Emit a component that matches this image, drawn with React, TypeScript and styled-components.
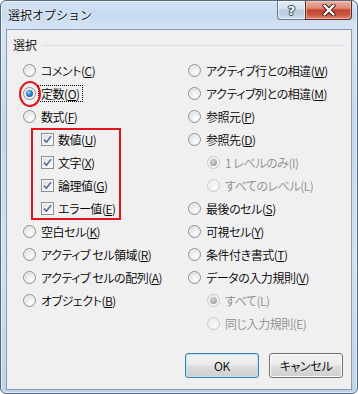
import React from "react";
import styled, { createGlobalStyle, css } from "styled-components";

const Global = createGlobalStyle`
  html, body { margin: 0; padding: 0; background: #ffffff; }
  body {
    font-family: "Noto Sans CJK JP", "Noto Sans", sans-serif;
    font-size: 12px;
    color: #000;
  }
  * { box-sizing: border-box; }
`;

const Window = styled.div`
  width: 358px;
  height: 394px;
  display: flex;
  flex-direction: column;
  border: 1px solid #56687c;
  border-radius: 6px;
  background: linear-gradient(
    180deg,
    #d3e3f4 0px,
    #c6daf0 14px,
    #d6e5f5 28px,
    #c4d9ef 120px,
    #d0e1f3 260px,
    #bed4ec 393px
  );
  box-shadow: inset 0 0 0 1px rgba(255, 255, 255, 0.55);
  overflow: hidden;
`;

const TitleBar = styled.div`
  height: 28px;
  display: flex;
  align-items: flex-start;
  flex-shrink: 0;
`;

const Title = styled.div`
  align-self: center;
  padding-left: 7px;
  font-size: 12px;
  line-height: 16px;
  font-weight: 350;
  color: #000;
  text-shadow: 0 0 6px rgba(255, 255, 255, 0.9), 0 0 2px #fff;
  flex: 1;
`;

const CaptionButtons = styled.div`
  display: flex;
  margin-right: 5px;
  margin-top: -1px;
`;

const HelpButton = styled.div`
  width: 28px;
  height: 20px;
  border: 1px solid #66788d;
  border-top-color: #7f90a3;
  border-right: none;
  border-radius: 0 0 0 4px;
  background: linear-gradient(180deg, #e6eef7 0%, #d3e0ee 45%, #b9cbe0 50%, #c2d3e6 80%, #d5e3f2 100%);
  box-shadow: inset 0 0 0 1px rgba(255, 255, 255, 0.6);
  display: flex;
  align-items: center;
  justify-content: center;
  font-family: "DejaVu Sans", sans-serif;
  font-weight: bold;
  font-size: 13px;
  color: #ffffff;
  text-shadow: 0 0 1px #2f3d4c, 0 0 1px #2f3d4c, 1px 0 0 #3a4a5c, -1px 0 0 #3a4a5c,
    0 1px 0 #3a4a5c, 0 -1px 0 #3a4a5c;
`;

const CloseButton = styled.div`
  width: 47px;
  height: 20px;
  border: 1px solid #5b2a25;
  border-top-color: #7a3b33;
  border-radius: 0 0 4px 0;
  background: linear-gradient(180deg, #eab2a4 0%, #dc8a78 40%, #c8452f 50%, #c95541 75%, #e2876f 100%);
  box-shadow: inset 0 0 0 1px rgba(255, 220, 210, 0.5);
  display: flex;
  align-items: center;
  justify-content: center;
`;

const Client = styled.div`
  flex: 1;
  margin: 0 5px 3px 5px;
  border: 1px solid #8a9bb0;
  background: #f0f0f0;
  display: flex;
  flex-direction: column;
`;

const GroupHeader = styled.div`
  display: flex;
  align-items: center;
  height: 16px;
  margin: 7px 6px 0 6px;
`;

const GroupLabel = styled.span`
  line-height: 16px;
  font-size: 12px;
  font-weight: 350;
`;

const Rule = styled.div`
  flex: 1;
  height: 1px;
  margin-left: 5px;
  background: #d5dfe5;
`;

const Columns = styled.div`
  display: grid;
  grid-template-columns: 165px 1fr;
  padding-left: 16px;
  margin-top: 6px;
`;

const Column = styled.div`
  display: flex;
  flex-direction: column;
`;

const Row = styled.div<{ $indent?: boolean }>`
  height: 23px;
  display: flex;
  align-items: center;
  padding-left: ${(p) => (p.$indent ? "19px" : "0")};
`;

const Label = styled.span<{ $disabled?: boolean; $focus?: boolean }>`
  display: inline-block;
  line-height: 15px;
  padding: 0 1px;
  font-size: 12px;
  font-weight: 350;
  letter-spacing: -0.45px;
  font-feature-settings: "palt";
  white-space: pre;
  color: ${(p) => (p.$disabled ? "#8d8d8d" : "#000")};
  ${(p) =>
    p.$focus &&
    css`
      outline: 1px dotted #000;
      padding: 0 2px;
      margin-left: -1px;
    `}
  u {
    text-decoration: underline;
    text-underline-offset: 1px;
  }
`;

const RadioWrap = styled.span`
  position: relative;
  display: inline-flex;
  width: 13px;
  height: 13px;
  margin-right: 4px;
  flex-shrink: 0;
`;

const RadioCircle = styled.span<{ $checked?: boolean; $disabled?: boolean }>`
  width: 13px;
  height: 13px;
  border-radius: 50%;
  border: 1px solid ${(p) => (p.$disabled ? "#c9c9c9" : "#8c8f91")};
  background: ${(p) =>
    p.$disabled
      ? "radial-gradient(circle at 65% 70%, #fbfbfb 0%, #eeeeee 60%, #e2e2e2 100%)"
      : "radial-gradient(circle at 65% 70%, #ffffff 0%, #e8e8e8 55%, #cfcfcf 100%)"};
  box-shadow: inset 0 0 0 1px ${(p) => (p.$disabled ? "#f4f4f4" : "#f2f2f2")};
  display: flex;
  align-items: center;
  justify-content: center;
`;

const RadioDot = styled.span<{ $disabled?: boolean }>`
  width: 7px;
  height: 7px;
  border-radius: 50%;
  background: ${(p) =>
    p.$disabled
      ? "radial-gradient(circle at 40% 35%, #d8d8d8 0%, #a9a9a9 60%, #8e8e8e 100%)"
      : "radial-gradient(circle at 40% 35%, #9ad8ff 0%, #2a82cc 45%, #0d3f79 100%)"};
`;

const Ring = styled.span`
  position: absolute;
  left: 50%;
  top: 50%;
  width: 22px;
  height: 26px;
  transform: translate(-50%, -50%);
  border: 2px solid #e5121b;
  border-radius: 50%;
  pointer-events: none;
`;

const CheckGroup = styled.div`
  margin-left: 8px;
  width: 90px;
  padding-left: 10px;
  box-shadow: inset 0 0 0 2px #e5121b;
  display: flex;
  flex-direction: column;
`;

const CheckBox = styled.span`
  width: 13px;
  height: 13px;
  margin-right: 3px;
  border: 1px solid #8e8f8f;
  background: linear-gradient(135deg, #dcdcdc 0%, #f0f0f0 55%, #fbfbfb 100%);
  box-shadow: inset 0 0 0 1px #f6f6f6;
  display: flex;
  align-items: center;
  justify-content: center;
  flex-shrink: 0;
`;

const ButtonRow = styled.div`
  margin-top: auto;
  display: flex;
  justify-content: flex-end;
  gap: 10px;
  padding: 0 8px 11px 0;
`;

const DialogButton = styled.button<{ $default?: boolean }>`
  width: 74px;
  height: 25px;
  border-radius: 3px;
  border: 1px solid ${(p) => (p.$default ? "#3c7fb1" : "#707070")};
  background: linear-gradient(180deg, #f2f2f2 0%, #ebebeb 48%, #dddddd 52%, #cfcfcf 100%);
  box-shadow: inset 0 0 0 1px ${(p) => (p.$default ? "#bfe3f7" : "#fbfbfb")};
  font-family: "Noto Sans CJK JP", "Noto Sans", sans-serif;
  font-feature-settings: "palt";
  font-weight: 350;
  letter-spacing: -0.3px;
  font-size: 12px;
  color: #000;
  padding: 0;
  line-height: 15px;
`;

type RadioProps = {
  label: React.ReactNode;
  checked?: boolean;
  disabled?: boolean;
  focus?: boolean;
  ring?: boolean;
  indent?: boolean;
};

const Radio = ({ label, checked, disabled, focus, ring, indent }: RadioProps) => (
  <Row $indent={indent}>
    <RadioWrap>
      <RadioCircle $checked={checked} $disabled={disabled}>
        {checked && <RadioDot $disabled={disabled} />}
      </RadioCircle>
      {ring && <Ring />}
    </RadioWrap>
    <Label $disabled={disabled} $focus={focus}>
      {label}
    </Label>
  </Row>
);

const Check = ({ label }: { label: React.ReactNode }) => (
  <Row>
    <CheckBox>
      <svg width="9" height="9" viewBox="0 0 9 9">
        <path d="M1 4.6 L3.4 7.2 L8 1.2" fill="none" stroke="#5a6d98" strokeWidth="1.6" strokeLinejoin="round" />
      </svg>
    </CheckBox>
    <Label>{label}</Label>
  </Row>
);

const CloseIcon = () => (
  <svg width="14" height="12" viewBox="0 0 14 12">
    <path d="M2.5 1.5 L11.5 10.5 M11.5 1.5 L2.5 10.5" stroke="#3d1b17" strokeWidth="4.2" strokeLinecap="round" />
    <path d="M2.5 1.5 L11.5 10.5 M11.5 1.5 L2.5 10.5" stroke="#ffffff" strokeWidth="2.4" strokeLinecap="round" />
  </svg>
);

export default function App() {
  return (
    <>
      <Global />
      <Window>
        <TitleBar>
          <Title>選択オプション</Title>
          <CaptionButtons>
            <HelpButton>?</HelpButton>
            <CloseButton>
              <CloseIcon />
            </CloseButton>
          </CaptionButtons>
        </TitleBar>
        <Client>
          <GroupHeader>
            <GroupLabel>選択</GroupLabel>
            <Rule />
          </GroupHeader>
          <Columns>
            <Column>
              <Radio label={<>コメント(<u>C</u>)</>} />
              <Radio label={<>定数(<u>O</u>)</>} checked focus ring />
              <Radio label={<>数式(<u>F</u>)</>} />
              <CheckGroup>
                <Check label={<>数値(<u>U</u>)</>} />
                <Check label={<>文字(<u>X</u>)</>} />
                <Check label={<>論理値(<u>G</u>)</>} />
                <Check label={<>エラー値(<u>E</u>)</>} />
              </CheckGroup>
              <Radio label={<>空白セル(<u>K</u>)</>} />
              <Radio label={<>アクティブ セル領域(<u>R</u>)</>} />
              <Radio label={<>アクティブ セルの配列(<u>A</u>)</>} />
              <Radio label={<>オブジェクト(<u>B</u>)</>} />
            </Column>
            <Column>
              <Radio label={<>アクティブ行との相違(<u>W</u>)</>} />
              <Radio label={<>アクティブ列との相違(<u>M</u>)</>} />
              <Radio label={<>参照元(<u>P</u>)</>} />
              <Radio label={<>参照先(<u>D</u>)</>} />
              <Radio indent disabled checked label="1 レベルのみ(I)" />
              <Radio indent disabled label="すべてのレベル(L)" />
              <Radio label={<>最後のセル(<u>S</u>)</>} />
              <Radio label={<>可視セル(<u>Y</u>)</>} />
              <Radio label={<>条件付き書式(<u>T</u>)</>} />
              <Radio label={<>データの入力規則(<u>V</u>)</>} />
              <Radio indent disabled checked label="すべて(L)" />
              <Radio indent disabled label="同じ入力規則(E)" />
            </Column>
          </Columns>
          <ButtonRow>
            <DialogButton $default>OK</DialogButton>
            <DialogButton>キャンセル</DialogButton>
          </ButtonRow>
        </Client>
      </Window>
    </>
  );
}
